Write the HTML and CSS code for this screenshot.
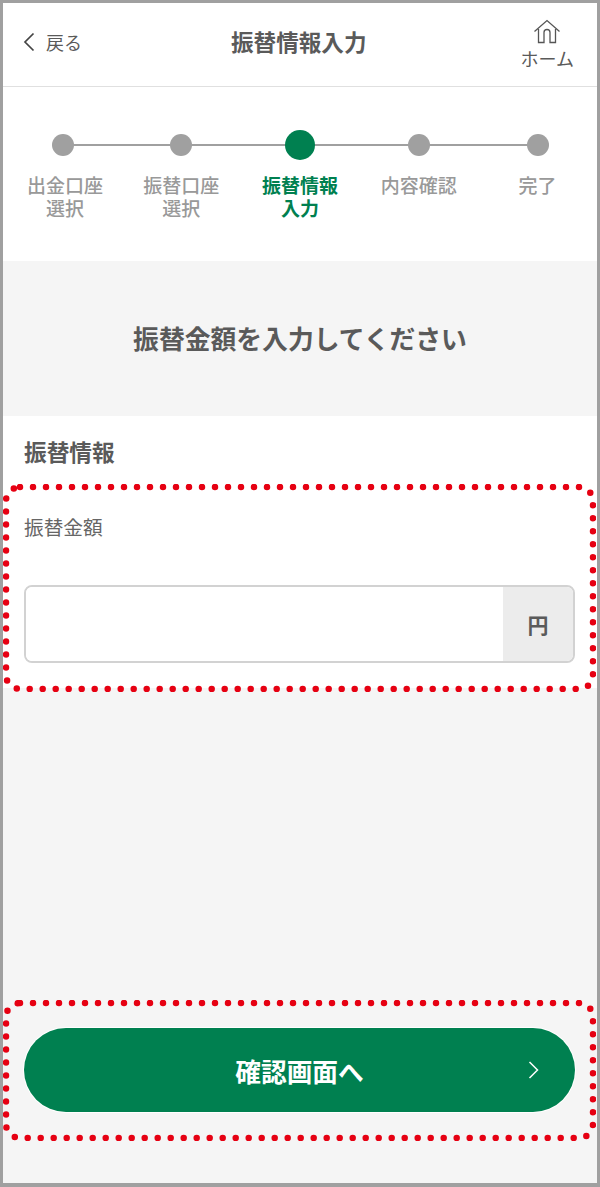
FILE: index.html
```html
<!DOCTYPE html>
<html lang="ja">
<head>
    <meta charset="UTF-8">
    <meta name="viewport" content="width=device-width, initial-scale=1.0">
    <title>振替情報入力</title>
    <link rel="stylesheet" href="styles.css">
</head>
<body>
    <div class="frame">
        <header class="header">
            <a class="back">
                <svg class="back-icon" width="12" height="20" viewBox="0 0 12 20"><path d="M10.500 1.500 2 10l8.500 8.500" fill="none" stroke="#444" stroke-width="1.700"/></svg>
                <span>戻る</span>
            </a>
            <h1 class="title">振替情報入力</h1>
            <a class="home">
                <svg width="28" height="25" viewBox="0 0 28 25"><path d="M1.500 12.500 14 1.500l12.500 11M5.500 10v13.500h5.500V13.500a3 3 0 0 1 6 0v10h5.500V10" fill="none" stroke="#555" stroke-width="1.300"/></svg>
                <span>ホーム</span>
            </a>
        </header>

        <ol class="steps">
            <li class="step"><span class="dot"></span><span class="step-label">出金口座<br>選択</span></li>
            <li class="step"><span class="dot"></span><span class="step-label">振替口座<br>選択</span></li>
            <li class="step current"><span class="dot"></span><span class="step-label">振替情報<br>入力</span></li>
            <li class="step"><span class="dot"></span><span class="step-label">内容確認</span></li>
            <li class="step"><span class="dot"></span><span class="step-label">完了</span></li>
        </ol>

        <div class="lead">振替金額を入力してください</div>

        <section class="info">
            <h2 class="info-title">振替情報</h2>
            <label class="field-label" for="amount">振替金額</label>
            <div class="amount">
                <input type="text" id="amount" class="amount-input">
                <span class="unit">円</span>
            </div>
        </section>

        <div class="bottom">
            <button type="button" class="next">
                確認画面へ
                <svg class="next-icon" width="12" height="20" viewBox="0 0 12 20"><path d="M1.500 2 9.500 10l-8 8" fill="none" stroke="#fff" stroke-width="1.500"/></svg>
            </button>
        </div>

        <!-- red dotted callouts on top of the screenshot -->
        <svg class="callout callout-form" width="593" height="208" viewBox="0 0 593 208"><rect x="3" y="3" width="587" height="202" rx="14" /></svg>
        <svg class="callout callout-button" width="593" height="141" viewBox="0 0 593 141"><rect x="3" y="3" width="587" height="135" rx="14" /></svg>
    </div>
</body>
</html>
```

FILE: styles.css
```css
* {
    box-sizing: border-box;
}

body {
    margin: 0;
    font-family: "Noto Sans CJK JP", "Noto Sans", sans-serif;
    color: #5a5a5a;
}

.frame {
    position: relative;
    display: flex;
    flex-direction: column;
    height: 1187px;
    border: solid #a0a0a0;
    border-width: 3px 3px 4px;
    background-color: #f5f5f5;
}

.header {
    display: flex;
    justify-content: space-between;
    align-items: center;
    height: 84px;
    padding: 0 23px 0 20px;
    background-color: #fff;
    border-bottom: 1px solid #e0e0e0;
}

.back {
    display: flex;
    align-items: center;
    gap: 11px;
    margin-bottom: 6px;
    font-size: 18px;
}

.title {
    margin: 0 0 6px -5px;
    font-size: 22.600px;
    font-weight: 700;
}

.home {
    display: flex;
    flex-direction: column;
    align-items: center;
    gap: 2px;
    font-size: 18px;
    line-height: 24px;
}

.steps {
    display: grid;
    grid-template-columns: repeat(5, 1fr);
    height: 174px;
    margin: 0;
    padding: 0;
    list-style: none;
    background-color: #fff;
}

.step {
    position: relative;
    display: flex;
    flex-direction: column;
    align-items: center;
    padding-top: 47px;
}

.step:not(:last-child)::after {
    content: "";
    position: absolute;
    top: 57px;
    left: 50%;
    width: 100%;
    height: 2px;
    background-color: #a0a0a0;
}

.dot {
    position: relative;
    z-index: 1;
    width: 22px;
    height: 22px;
    border-radius: 50%;
    background-color: #a0a0a0;
}

.step-label {
    margin-top: 17px;
    font-size: 19px;
    font-weight: 500;
    line-height: 23px;
    text-align: center;
    color: #999;
}

.step:first-child .dot {
    margin-left: 1px;
}

.step:first-child .step-label {
    margin-left: 5px;
}

.current {
    padding-top: 43px;
}

.current .dot {
    width: 30px;
    height: 30px;
    background-color: #008050;
}

.current .step-label {
    margin-top: 13px;
    font-weight: 700;
    color: #008050;
}

.lead {
    height: 155px;
    padding-top: 58px;
    font-size: 25.800px;
    font-weight: 700;
    line-height: 38px;
    text-align: center;
}

.info {
    height: 272px;
    padding: 19px 22px 0 21px;
    background-color: #fff;
}

.info-title {
    margin: 0;
    font-size: 22.700px;
    font-weight: 700;
    line-height: 34px;
}

.field-label {
    display: block;
    margin-top: 43px;
    font-size: 19.700px;
    line-height: 30px;
    color: #666;
}

.amount {
    display: flex;
    height: 78px;
    margin-top: 43px;
    overflow: hidden;
    border: 2px solid #d2d2d2;
    border-radius: 8px;
}

.amount-input {
    flex: 1;
    min-width: 0;
    border: none;
    outline: none;
}

.unit {
    display: flex;
    justify-content: center;
    align-items: center;
    width: 70px;
    font-size: 21px;
    font-weight: 700;
    background-color: #ececec;
}

.bottom {
    padding: 340px 22px 0 21px;
}

.next {
    position: relative;
    display: block;
    width: 100%;
    height: 84px;
    padding: 0;
    border: none;
    border-radius: 42px;
    box-shadow: 0 0 0 1px #fff;
    font-family: inherit;
    font-size: 25.700px;
    font-weight: 700;
    color: #fff;
    background-color: #008050;
}

.next-icon {
    position: absolute;
    top: 32px;
    right: 35px;
}

.callout {
    position: absolute;
    left: 0;
    fill: none;
    stroke: #e60012;
    stroke-width: 6.500px;
    stroke-linecap: round;
    stroke-dasharray: 0 13;
}

.callout-form {
    top: 481px;
}

.callout-button {
    top: 997px;
}
```
